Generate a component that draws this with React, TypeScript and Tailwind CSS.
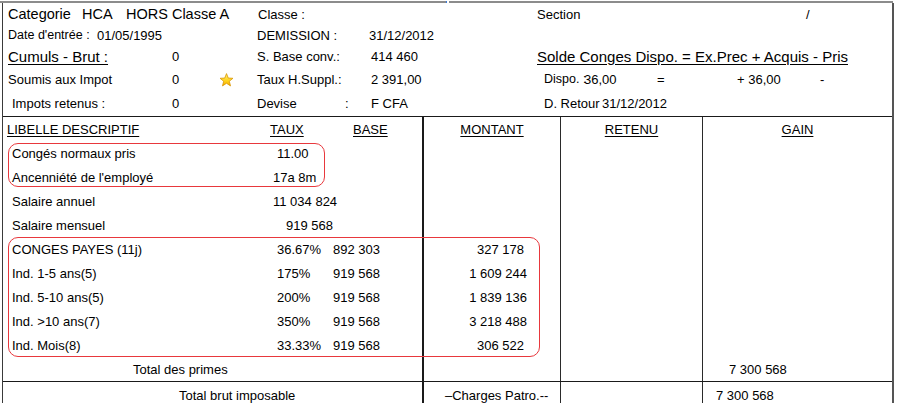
import React from "react";

type Row = {
  label: string;
  lw: string;
  taux: string;
  base?: string;
  montant?: string;
  mp?: string;
};

const rows: Row[] = [
  { label: "Congés normaux pris", lw: "w-[265px]", taux: "11.00" },
  { label: "Ancenniété de l'employé", lw: "w-[261px]", taux: "17a 8m" },
  { label: "Salaire annuel", lw: "w-[261px]", taux: "11 034 824" },
  { label: "Salaire mensuel", lw: "w-[274px]", taux: "919 568" },
  { label: "CONGES PAYES (11j)", lw: "w-[265px]", taux: "36.67%", base: "892 303", montant: "327 178", mp: "pr-[36px]" },
  { label: "Ind. 1-5 ans(5)", lw: "w-[265px]", taux: "175%", base: "919 568", montant: "1 609 244", mp: "pr-[33px]" },
  { label: "Ind. 5-10 ans(5)", lw: "w-[265px]", taux: "200%", base: "919 568", montant: "1 839 136", mp: "pr-[33px]" },
  { label: "Ind. >10 ans(7)", lw: "w-[265px]", taux: "350%", base: "919 568", montant: "3 218 488", mp: "pr-[33px]" },
  { label: "Ind. Mois(8)", lw: "w-[265px]", taux: "33.33%", base: "919 568", montant: "306 522", mp: "pr-[36px]" },
];

function Star() {
  return (
    <svg width="15" height="14" viewBox="0 0 24 23">
      <defs>
        <linearGradient id="sg" x1="0" y1="0" x2="0" y2="1">
          <stop offset="0" stopColor="#fff07a" />
          <stop offset="0.6" stopColor="#ffd21a" />
          <stop offset="1" stopColor="#f2a900" />
        </linearGradient>
      </defs>
      <path
        d="M12 1 L14.9 8.3 L22.6 8.7 L16.6 13.6 L18.6 21.2 L12 16.9 L5.4 21.2 L7.4 13.6 L1.4 8.7 L9.1 8.3 Z"
        fill="url(#sg)"
        stroke="#d89400"
        strokeWidth="1.3"
        strokeLinejoin="round"
      />
    </svg>
  );
}

function Cells({
  c1,
  c2,
  c3,
  c4,
  h = "h-[24px]",
}: {
  c1?: React.ReactNode;
  c2?: React.ReactNode;
  c3?: React.ReactNode;
  c4?: React.ReactNode;
  h?: string;
}) {
  return (
    <div className={`flex ${h}`}>
      <div className="w-[421px] shrink-0 border-r-2 border-[#1a1a1a] flex items-center">{c1}</div>
      <div className="w-[137px] shrink-0 border-r border-[#2a2a2a] flex items-center">{c2}</div>
      <div className="w-[142px] shrink-0 border-r border-[#2a2a2a] flex items-center">{c3}</div>
      <div className="w-[189px] shrink-0 flex items-center">{c4}</div>
    </div>
  );
}

export default function App() {
  return (
    <div className="relative w-[898px] h-[403px] overflow-hidden bg-white text-black text-[13px] leading-none whitespace-nowrap font-['Liberation_Sans',Arial,sans-serif]">
      {/* top border */}
      <div className="pt-[1px] flex">
        <div className="w-[446px] h-[2px] bg-[#8c8c8c]" />
        <div className="w-[1px] h-[2px] bg-[#3b7ddd]" />
        <div className="w-[2px] h-[2px]" />
        <div className="w-[444px] h-[2px] bg-[#8c8c8c]" />
      </div>

      <div className="ml-[2px] w-[892px] border-l border-r-2 border-[#3a3a3a] border-r-[#555]">
        {/* header */}
        <div className="border-b border-[#1a1a1a]">
          <div className="flex items-center h-[22px] pl-[5px]">
            <span className="w-[74px] shrink-0 text-[14.5px]">Categorie</span>
            <span className="w-[44px] shrink-0 text-[14.5px]">HCA</span>
            <span className="w-[132px] shrink-0 text-[14.5px]">HORS Classe A</span>
            <span className="w-[279px] shrink-0">Classe :</span>
            <span className="w-[269px] shrink-0">Section</span>
            <span>/</span>
          </div>
          <div className="flex items-center h-[20px] pl-[5px]">
            <span className="w-[89px] shrink-0 text-[12.5px]">Date d'entrée :</span>
            <span className="w-[160px] shrink-0">01/05/1995</span>
            <span className="w-[112px] shrink-0">DEMISSION :</span>
            <span>31/12/2012</span>
          </div>
          <div className="flex items-center h-[23px] pl-[5px]">
            <span className="w-[164px] shrink-0 text-[15px] underline underline-offset-2">Cumuls - Brut :</span>
            <span className="w-[85px] shrink-0">0</span>
            <span className="w-[114px] shrink-0">S. Base conv.:</span>
            <span className="w-[166px] shrink-0">414 460</span>
            <span className="text-[15px] underline underline-offset-2">Solde Conges Dispo. = Ex.Prec + Acquis - Pris</span>
          </div>
          <div className="flex items-center h-[23px] pl-[5px]">
            <span className="w-[164px] shrink-0">Soumis aux Impot</span>
            <span className="w-[47px] shrink-0">0</span>
            <span className="w-[38px] shrink-0 flex">
              <Star />
            </span>
            <span className="w-[114px] shrink-0">Taux H.Suppl.:</span>
            <span className="w-[173px] shrink-0">2 391,00</span>
            <span className="w-[40px] shrink-0 text-[12.5px]">Dispo. :</span>
            <span className="w-[73px] shrink-0">36,00</span>
            <span className="w-[80px] shrink-0">=</span>
            <span className="w-[83px] shrink-0">+ 36,00</span>
            <span>-</span>
          </div>
          <div className="flex items-center h-[25px] pl-[9px]">
            <span className="w-[160px] shrink-0">Impots retenus :</span>
            <span className="w-[85px] shrink-0">0</span>
            <span className="w-[88px] shrink-0">Devise</span>
            <span className="w-[26px] shrink-0">:</span>
            <span className="w-[173px] shrink-0">F CFA</span>
            <span className="w-[58px] shrink-0">D. Retour</span>
            <span>31/12/2012</span>
          </div>
        </div>

        {/* table header */}
        <Cells
          c1={
            <div className="flex pl-[4px]">
              <span className="w-[263px] shrink-0 underline underline-offset-2">LIBELLE DESCRIPTIF</span>
              <span className="w-[83px] shrink-0 underline underline-offset-2">TAUX</span>
              <span className="underline underline-offset-2">BASE</span>
            </div>
          }
          c2={<span className="w-full text-center underline underline-offset-2">MONTANT</span>}
          c3={<span className="w-full text-center underline underline-offset-2">RETENU</span>}
          c4={<span className="w-full text-center underline underline-offset-2">GAIN</span>}
        />

        {rows.map((r) => (
          <Cells
            key={r.label}
            c1={
              <div className="flex pl-[9px]">
                <span className={`${r.lw} shrink-0`}>{r.label}</span>
                <span className="w-[56px] shrink-0">{r.taux}</span>
                {r.base && <span>{r.base}</span>}
              </div>
            }
            c2={r.montant ? <span className={`w-full text-right ${r.mp}`}>{r.montant}</span> : null}
          />
        ))}

        <Cells
          c1={<span className="pl-[130px]">Total des primes</span>}
          c4={<span className="pl-[26px]">7 300 568</span>}
        />

        <div className="border-t border-[#1a1a1a]">
          <Cells
            h="h-[26px]"
            c1={<span className="pl-[176px]">Total brut imposable</span>}
            c2={<span className="pl-[21px]">–Charges Patro.--</span>}
            c4={<span className="pl-[13px]">7 300 568</span>}
          />
        </div>
      </div>

      {/* red annotation frames */}
      <div className="absolute left-[8px] top-[143px] w-[317px] h-[44px] rounded-[10px] border-[1.5px] border-[#e8383d]" />
      <div className="absolute left-[8px] top-[237px] w-[532px] h-[120px] rounded-[10px] border-[1.5px] border-[#e8383d]" />
    </div>
  );
}
